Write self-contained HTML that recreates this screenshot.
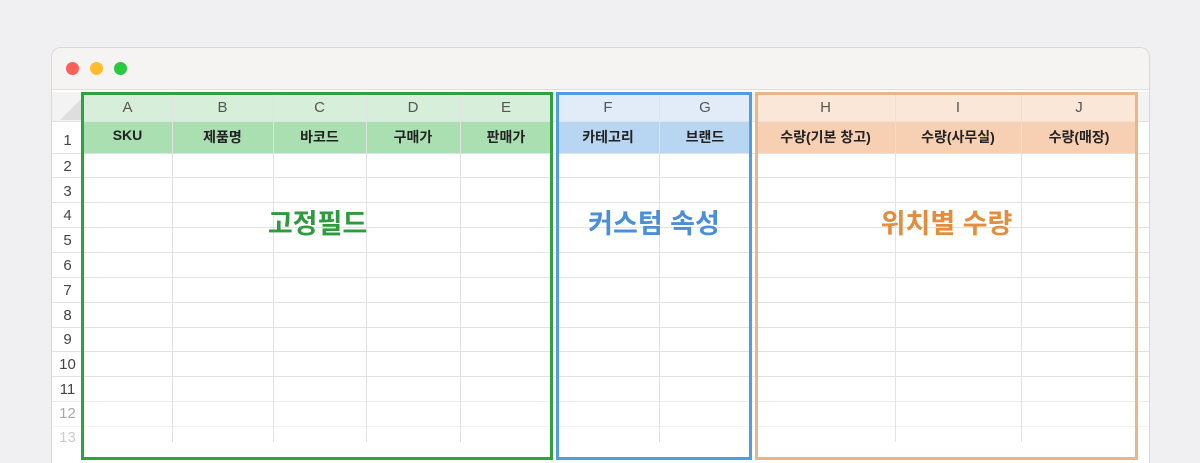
<!DOCTYPE html>
<html><head><meta charset="utf-8"><style>
*{margin:0;padding:0;box-sizing:border-box}
html,body{width:1200px;height:463px;overflow:hidden}
body{background:#f0f0f2;position:relative;font-family:"Liberation Sans","Noto Sans CJK KR",sans-serif}
.win{position:absolute;left:51px;top:47px;width:1099px;height:416px;background:#fff;border-radius:10px 10px 0 0;border:1px solid #d8d8d8;border-bottom:none;overflow:hidden}
.tb{position:absolute;left:0;top:0;right:0;height:42px;background:#f5f4f3;border-bottom:1px solid #dedede}
.dot{position:absolute;top:14px;width:13px;height:13px;border-radius:50%}
.abs{position:absolute}
.hl{position:absolute;left:0;right:0;height:1px;background:#e2e2e2}
.vl{position:absolute;width:1px;background:#e2e2e2}
.rn{position:absolute;left:0;width:31px;text-align:center;font-size:15px;color:#444}
.cl{position:absolute;text-align:center;font-size:15px;color:#555;top:51px}
.h1{position:absolute;text-align:center;font-size:14px;font-weight:bold;color:#222;top:79px}
.big{position:absolute;font-size:27px;font-weight:bold;text-align:center}
.box{position:absolute;border:3px solid}
</style></head><body>
<div class="win">
<div class="tb">
<div class="dot" style="left:14px;background:#fe5f57"></div>
<div class="dot" style="left:38px;background:#febc2e"></div>
<div class="dot" style="left:62px;background:#28c840"></div>
</div>
<div class="abs" style="left:0;top:44px;width:31px;height:29px;background:#f3f3f3"></div>
<svg class="abs" style="left:8px;top:50px" width="22" height="22"><polygon points="22,0 22,22 0,22" fill="#dedede"/></svg>
<div class="abs" style="left:31px;top:44px;width:1068px;height:29px;background:#f3f3f3"></div>
<div class="abs" style="left:31px;top:44px;width:469px;height:29px;background:#d7efda"></div>
<div class="abs" style="left:31px;top:73px;width:469px;height:32px;background:#a9dfb1"></div>
<div class="abs" style="left:505px;top:44px;width:194px;height:29px;background:#e2ecf8"></div>
<div class="abs" style="left:505px;top:73px;width:194px;height:32px;background:#b8d5f1"></div>
<div class="abs" style="left:704px;top:44px;width:381px;height:29px;background:#fbe7d8"></div>
<div class="abs" style="left:704px;top:73px;width:381px;height:32px;background:#f7d0b3"></div>
<div class="hl" style="top:73px"></div>
<div class="hl" style="top:105px"></div>
<div class="hl" style="top:129px"></div>
<div class="hl" style="top:154px"></div>
<div class="hl" style="top:179px"></div>
<div class="hl" style="top:204px"></div>
<div class="hl" style="top:229px"></div>
<div class="hl" style="top:254px"></div>
<div class="hl" style="top:279px"></div>
<div class="hl" style="top:303px"></div>
<div class="hl" style="top:328px"></div>
<div class="hl" style="top:353px;background:#ececec"></div>
<div class="hl" style="top:378px;background:#f3f3f3"></div>
<div class="vl" style="left:120px;top:44px;height:350px"></div>
<div class="vl" style="left:221px;top:44px;height:350px"></div>
<div class="vl" style="left:314px;top:44px;height:350px"></div>
<div class="vl" style="left:408px;top:44px;height:350px"></div>
<div class="vl" style="left:607px;top:44px;height:350px"></div>
<div class="vl" style="left:843px;top:44px;height:350px"></div>
<div class="vl" style="left:969px;top:44px;height:350px"></div>
<div class="vl" style="left:1085px;top:44px;height:350px"></div>
<div class="rn" style="top:84px">1</div>
<div class="rn" style="top:110px">2</div>
<div class="rn" style="top:135px">3</div>
<div class="rn" style="top:159px">4</div>
<div class="rn" style="top:184px">5</div>
<div class="rn" style="top:209px">6</div>
<div class="rn" style="top:234px">7</div>
<div class="rn" style="top:259px">8</div>
<div class="rn" style="top:283px">9</div>
<div class="rn" style="top:308px">10</div>
<div class="rn" style="top:333px">11</div>
<div class="rn" style="top:357px;color:#aaa">12</div>
<div class="rn" style="top:381px;color:#ccc">13</div>
<div class="cl" style="left:31px;width:89px">A</div>
<div class="cl" style="left:120px;width:101px">B</div>
<div class="cl" style="left:221px;width:93px">C</div>
<div class="cl" style="left:314px;width:94px">D</div>
<div class="cl" style="left:408px;width:92px">E</div>
<div class="cl" style="left:505px;width:102px">F</div>
<div class="cl" style="left:607px;width:92px">G</div>
<div class="cl" style="left:704px;width:139px">H</div>
<div class="cl" style="left:843px;width:126px">I</div>
<div class="cl" style="left:969px;width:116px">J</div>
<div class="h1" style="left:31px;width:89px">SKU</div>
<div class="h1" style="left:120px;width:101px">제품명</div>
<div class="h1" style="left:221px;width:93px">바코드</div>
<div class="h1" style="left:314px;width:94px">구매가</div>
<div class="h1" style="left:408px;width:92px">판매가</div>
<div class="h1" style="left:505px;width:102px">카테고리</div>
<div class="h1" style="left:607px;width:92px">브랜드</div>
<div class="h1" style="left:704px;width:139px">수량(기본 창고)</div>
<div class="h1" style="left:843px;width:126px">수량(사무실)</div>
<div class="h1" style="left:969px;width:116px">수량(매장)</div>
<div class="big" style="left:29px;width:473px;top:154px;color:#2e9b3e">고정필드</div>
<div class="big" style="left:504px;width:196px;top:154px;color:#4a8fd8">커스텀 속성</div>
<div class="big" style="left:703px;width:383px;top:154px;color:#e38d3f">위치별 수량</div>
<div class="box" style="left:29px;top:44px;width:472px;height:368px;border-color:#2ea23f"></div>
<div class="box" style="left:504px;top:44px;width:196px;height:368px;border-color:#519de5"></div>
<div class="box" style="left:703px;top:44px;width:383px;height:368px;border-color:#ebb587"></div>
</div>
</body></html>
